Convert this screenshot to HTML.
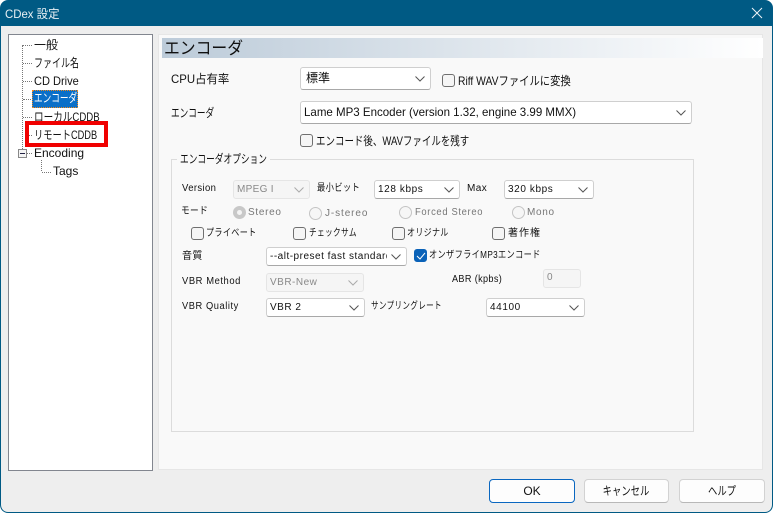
<!DOCTYPE html>
<html><head><meta charset="utf-8"><style>
html,body{margin:0;padding:0;background:#fff}
#w{position:relative;width:773px;height:513px;overflow:hidden;background:#005a84;font-family:"Liberation Sans","Noto Sans CJK JP",sans-serif;font-size:12px;color:#111;border-radius:8px 8px 8px 8px}
#b{position:absolute;left:1px;top:26px;width:771px;height:486px;background:#eeeeee;border-radius:0 0 7px 7px}
.a{position:absolute;white-space:nowrap;line-height:16px;transform-origin:0 50%}
.g{color:#777}
.dd{position:absolute;box-sizing:border-box;background:#fff;border:1px solid #cfcfcf;border-bottom:1px solid #a8a8a8;border-radius:3px;white-space:nowrap;overflow:hidden;padding-left:5px}
.dd.d{background:#f5f5f5;border:1px solid #e5e5e5;color:#888}
.dd svg{position:absolute;right:5px;top:50%;margin-top:-3px}
.cb{position:absolute;box-sizing:border-box;width:13px;height:13px;border:1px solid #6f6f6f;border-radius:3px;background:#f5f5f5}
.r{position:absolute;box-sizing:border-box;width:13px;height:13px;border:1px solid #c4c4c4;border-radius:50%;background:#f6f6f6}
.btn{position:absolute;box-sizing:border-box;height:24px;width:86px;top:479px;background:#fdfdfd;border:1px solid #d2d2d2;border-bottom-color:#b8b8b8;border-radius:4px;text-align:center;line-height:22px}
.btn span{display:inline-block;transform:scaleX(.78)}
.dot{position:absolute;border-color:#777;border-style:dotted;border-width:0}
.t{font-size:10px;letter-spacing:.4px}
</style></head><body><div id="w">
<div id="b"></div>
<div class="a" style="left:5px;top:6px;color:#e8f0f4;font-size:12px;transform:scaleX(.95)">CDex 設定</div>
<svg style="position:absolute;left:751px;top:7px" width="12" height="12"><path d="M1 1L11 11M11 1L1 11" stroke="#eef3f6" stroke-width="1" fill="none"/></svg>

<div style="position:absolute;left:8px;top:34px;width:145px;height:437px;box-sizing:border-box;background:#fff;border:1px solid #82868f"></div>
<div class="dot" style="left:22px;top:45px;height:104px;border-left-width:1px"></div>
<div class="dot" style="left:23px;top:45px;width:9px;border-top-width:1px"></div>
<div class="dot" style="left:23px;top:63px;width:9px;border-top-width:1px"></div>
<div class="dot" style="left:23px;top:81px;width:9px;border-top-width:1px"></div>
<div class="dot" style="left:23px;top:99px;width:8px;border-top-width:1px"></div>
<div class="dot" style="left:23px;top:117px;width:9px;border-top-width:1px"></div>
<div class="dot" style="left:29px;top:135px;width:3px;border-top-width:1px"></div>
<div class="dot" style="left:27px;top:153px;width:5px;border-top-width:1px"></div>
<div class="dot" style="left:41px;top:160px;height:11px;border-left-width:1px"></div>
<div class="dot" style="left:42px;top:172px;width:9px;border-top-width:1px"></div>
<div class="a" style="left:34px;top:37px">一般</div>
<div class="a" style="left:34px;top:55px;transform:scaleX(.75)">ファイル名</div>
<div class="a" style="left:34px;top:73px;transform:scaleX(.92)">CD Drive</div>
<div style="position:absolute;left:32px;top:90px;width:46px;height:18px;box-sizing:border-box;background:#0a6fc8;outline:1px dotted #f08a20;outline-offset:-1px"></div>
<div class="a" style="left:34px;top:90px;color:#fff;line-height:17px;transform:scaleX(.72)">エンコーダ</div>
<div class="a" style="left:34px;top:109px;transform:scaleX(.8)">ローカルCDDB</div>
<div style="position:absolute;left:25px;top:121px;width:83px;height:26px;box-sizing:border-box;border:4px solid #f00000"></div>
<div class="a" style="left:34px;top:127px;transform:scaleX(.77)">リモートCDDB</div>
<div style="position:absolute;left:18px;top:149px;width:9px;height:9px;box-sizing:border-box;border:1px solid #888;background:#f4f4f4"><div style="position:absolute;left:1px;top:3px;width:5px;height:1px;background:#224"></div></div>
<div class="a" style="left:34px;top:145px">Encoding</div>
<div class="a" style="left:53px;top:163px">Tags</div>

<div style="position:absolute;left:158px;top:34px;width:605px;height:436px;box-sizing:border-box;background:#f9f9f9;border:1px solid #e6e6e6"></div>
<div style="position:absolute;left:162px;top:38px;width:601px;height:20px;background:linear-gradient(90deg,#bccbd9,#ffffff)"></div>
<div class="a" style="left:164px;top:38px;font-size:17px;line-height:21px;transform:scaleX(.93)">エンコーダ</div>

<div class="a" style="left:171px;top:71px;transform:scaleX(.95)">CPU占有率</div>
<div class="dd" style="left:300px;top:67px;width:131px;height:23px;line-height:21px">標準<svg width="10" height="6"><path d="M.5.5L5 5L9.5.5" stroke="#555" fill="none"/></svg></div>
<div class="cb" style="left:442px;top:74px"></div>
<div class="a" style="left:458px;top:73px;transform:scaleX(.86)">Riff WAVファイルに変換</div>

<div class="a" style="left:171px;top:105px;transform:scaleX(.72)">エンコーダ</div>
<div class="dd" style="left:300px;top:101px;width:392px;height:23px;line-height:21px;padding-left:3px"><span style="display:inline-block;transform:scaleX(.96);transform-origin:0 50%">Lame MP3 Encoder (version 1.32, engine 3.99 MMX)</span><svg width="10" height="6"><path d="M.5.5L5 5L9.5.5" stroke="#555" fill="none"/></svg></div>
<div class="cb" style="left:300px;top:134px"></div>
<div class="a" style="left:316px;top:133px;transform:scaleX(.79)">エンコード後、WAVファイルを残す</div>

<div style="position:absolute;left:171px;top:159px;width:523px;height:273px;box-sizing:border-box;border:1px solid #dcdcdc"></div>
<div style="position:absolute;left:177px;top:152px;width:93px;height:14px;background:#f9f9f9"></div>
<div class="a" style="left:180px;top:151px;transform:scaleX(.725)">エンコーダオプション</div>

<div class="a t" style="left:182px;top:181px;transform:scaleX(.95)">Version</div>
<div class="dd d" style="left:233px;top:180px;width:77px;height:19px;font-size:10px;line-height:17px;padding-left:3px;letter-spacing:.3px">MPEG I<svg width="10" height="6"><path d="M.5.5L5 5L9.5.5" stroke="#aaa" fill="none"/></svg></div>
<div class="a t" style="left:317px;top:181px;transform:scaleX(.83)">最小ビット</div>
<div class="dd" style="left:374px;top:180px;width:86px;height:19px;font-size:10px;line-height:17px;padding-left:3px;letter-spacing:.6px">128 kbps<svg width="10" height="6"><path d="M.5.5L5 5L9.5.5" stroke="#555" fill="none"/></svg></div>
<div class="a t" style="left:467px;top:181px">Max</div>
<div class="dd" style="left:504px;top:180px;width:90px;height:19px;font-size:10px;line-height:17px;padding-left:3px;letter-spacing:.6px">320 kbps<svg width="10" height="6"><path d="M.5.5L5 5L9.5.5" stroke="#555" fill="none"/></svg></div>

<div class="a t" style="left:181px;top:204px;transform:scaleX(.87)">モード</div>
<div class="r" style="left:233px;top:206px;background:#c8c8c8;border-color:#c8c8c8"><div style="position:absolute;left:3px;top:3px;width:5px;height:5px;border-radius:50%;background:#f4f4f4"></div></div>
<div class="a g" style="left:248px;top:205px;font-size:10px;letter-spacing:.7px">Stereo</div>
<div class="r" style="left:309px;top:207px"></div>
<div class="a g" style="left:325px;top:206px;font-size:10px;letter-spacing:.9px">J-stereo</div>
<div class="r" style="left:399px;top:206px"></div>
<div class="a g" style="left:415px;top:205px;font-size:10px;letter-spacing:.7px;transform:scaleX(.94)">Forced Stereo</div>
<div class="r" style="left:512px;top:206px"></div>
<div class="a g" style="left:527px;top:205px;font-size:10px;letter-spacing:.7px">Mono</div>

<div class="cb" style="left:191px;top:227px"></div>
<div class="a t" style="left:206px;top:226px;transform:scaleX(.81)">プライベート</div>
<div class="cb" style="left:293px;top:227px"></div>
<div class="a t" style="left:309px;top:226px;transform:scaleX(.77)">チェックサム</div>
<div class="cb" style="left:392px;top:227px"></div>
<div class="a t" style="left:407px;top:226px;transform:scaleX(.8)">オリジナル</div>
<div class="cb" style="left:492px;top:227px"></div>
<div class="a" style="left:508px;top:226px;font-size:10px;letter-spacing:1px">著作権</div>

<div class="a t" style="left:182px;top:249px">音質</div>
<div class="dd" style="left:266px;top:247px;width:141px;height:19px;font-size:10px;line-height:17px;padding-left:3px;letter-spacing:.5px"><span style="display:block;width:117px;overflow:hidden">--alt-preset fast standard</span><svg width="10" height="6"><path d="M.5.5L5 5L9.5.5" stroke="#555" fill="none"/></svg></div>
<div class="cb" style="left:414px;top:249px;background:#0a62b8;border-color:#0a62b8"><svg style="position:absolute;left:1px;top:2px" width="10" height="8"><path d="M1 4L4 7L9 1" stroke="#fff" fill="none"/></svg></div>
<div class="a t" style="left:429px;top:248px;transform:scaleX(.82)">オンザフライMP3エンコード</div>

<div class="a" style="left:182px;top:274px;font-size:10px;letter-spacing:.6px;transform:scaleX(.94)">VBR Method</div>
<div class="dd d" style="left:266px;top:273px;width:98px;height:19px;font-size:10px;line-height:17px;padding-left:3px;letter-spacing:.5px">VBR-New<svg width="10" height="6"><path d="M.5.5L5 5L9.5.5" stroke="#aaa" fill="none"/></svg></div>
<div class="a t" style="left:452px;top:272px;transform:scaleX(.91)">ABR (kpbs)</div>
<div class="dd d" style="left:543px;top:269px;width:38px;height:19px;font-size:10px;line-height:15px;padding-left:3px">0</div>

<div class="a" style="left:182px;top:299px;font-size:10px;letter-spacing:.6px;transform:scaleX(.93)">VBR Quality</div>
<div class="dd" style="left:266px;top:298px;width:99px;height:19px;font-size:10px;line-height:17px;padding-left:3px;letter-spacing:.5px">VBR 2<svg width="10" height="6"><path d="M.5.5L5 5L9.5.5" stroke="#555" fill="none"/></svg></div>
<div class="a t" style="left:371px;top:299px;transform:scaleX(.76)">サンプリングレート</div>
<div class="dd" style="left:486px;top:298px;width:99px;height:19px;font-size:10px;line-height:17px;padding-left:3px;letter-spacing:.6px">44100<svg width="10" height="6"><path d="M.5.5L5 5L9.5.5" stroke="#555" fill="none"/></svg></div>

<div class="btn" style="left:489px;border:1.5px solid #0a67c0;background:#fdfdfd">OK</div>
<div class="btn" style="left:584px;width:85px"><span>キャンセル</span></div>
<div class="btn" style="left:679px;width:86px"><span>ヘルプ</span></div>
</div></body></html>
